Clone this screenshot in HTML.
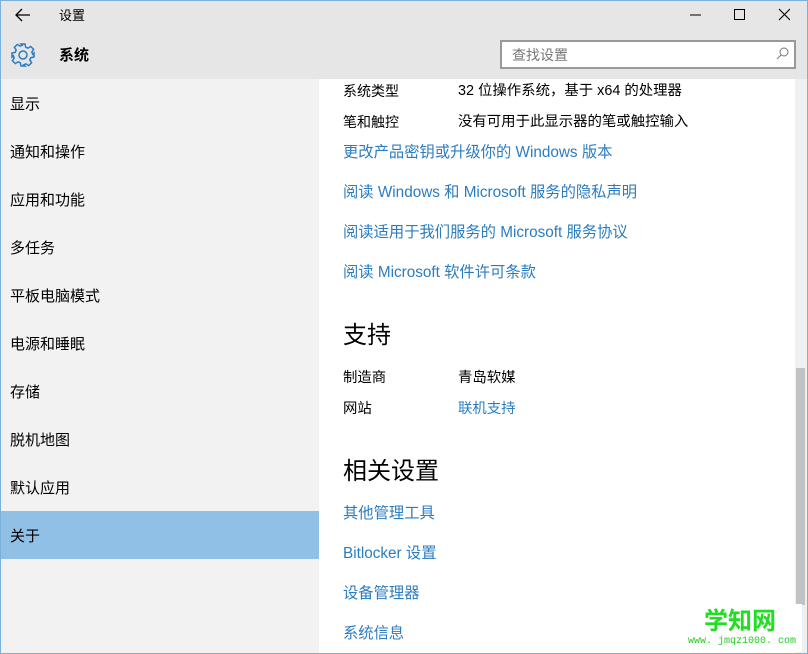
<!DOCTYPE html>
<html><head><meta charset="utf-8"><style>
*{margin:0;padding:0;box-sizing:border-box}
body{width:808px;height:654px;overflow:hidden;background:#fff;font-family:"Liberation Sans","Noto Sans CJK SC",sans-serif;position:relative;color:#000}
.a{position:absolute;white-space:nowrap;line-height:20px;font-size:15px;margin-top:2px}
#frame{position:absolute;left:0;top:0;width:808px;height:654px;border:1px solid #7ab0dc;pointer-events:none;z-index:9}
#hdr{position:absolute;left:0;top:0;width:808px;height:79px;background:#e6e6e6}
#side{position:absolute;left:0;top:79px;width:319px;height:575px;background:#f2f2f2}
#sel{position:absolute;left:0;top:511px;width:319px;height:48px;background:#90c0e6}
.l{color:#2b7cc0;font-size:15.3px}
#track{position:absolute;left:795px;top:79px;width:12px;height:575px;background:#f0f0f0}
#thumb{position:absolute;left:796px;top:368px;width:9px;height:237px;background:#c2c2c2}
</style></head><body>
<div id="hdr"></div>
<div id="side"></div>
<div id="sel"></div>
<div id="track"></div><div id="thumb"></div>
<div id="frame"></div>
<svg style="position:absolute;left:14px;top:7px" width="18" height="16"><path d="M16 8H2M8 2L2 8l6 6" stroke="#000" stroke-width="1.3" fill="none"/></svg>
<div class="a" style="left:59px;top:4px;font-size:13px">设置</div>
<svg style="position:absolute;left:690px;top:8px" width="100" height="14"><path d="M0 7h11" stroke="#000"/><rect x="44.5" y="1.5" width="10" height="10" stroke="#000" fill="none"/><path d="M89 1l11 11M100 1L89 12" stroke="#000" stroke-width="1.1"/></svg>
<svg style="position:absolute;left:10px;top:42px" width="26" height="26" viewBox="0 0 26 26"><g fill="none" stroke="#2b7cc0" stroke-width="1.5"><path d="M11 2h4l.7 3.2 2.2 1 2.8-1.8 2.9 2.9-1.8 2.8 1 2.2L24 11v4l-3.2.7-1 2.2 1.8 2.8-2.9 2.9-2.8-1.8-2.2 1L15 24h-4l-.7-3.2-2.2-1-2.8 1.8-2.9-2.9 1.8-2.8-1-2.2L2 15v-4l3.2-.7 1-2.2-1.8-2.8 2.9-2.9 2.8 1.8 2.2-1z"/><circle cx="13" cy="13" r="4"/></g></svg>
<div class="a" style="left:59px;top:44px;font-weight:bold">系统</div>
<div style="position:absolute;left:500px;top:40px;width:296px;height:29px;border:2px solid #999;background:#fff"></div>
<div class="a" style="left:512px;top:43px;color:#777;font-size:14px">查找设置</div>
<svg style="position:absolute;left:776px;top:47px" width="13" height="13"><circle cx="8" cy="5" r="4" stroke="#777" fill="none"/><path d="M5 8L1 12" stroke="#777"/></svg>
<div class="a" style="left:10px;top:93px">显示</div>
<div class="a" style="left:10px;top:141px">通知和操作</div>
<div class="a" style="left:10px;top:189px">应用和功能</div>
<div class="a" style="left:10px;top:237px">多任务</div>
<div class="a" style="left:10px;top:285px">平板电脑模式</div>
<div class="a" style="left:10px;top:333px">电源和睡眠</div>
<div class="a" style="left:10px;top:381px">存储</div>
<div class="a" style="left:10px;top:429px">脱机地图</div>
<div class="a" style="left:10px;top:477px">默认应用</div>
<div class="a" style="left:10px;top:525px">关于</div>
<div class="a" style="left:343px;top:79px;font-size:14px">系统类型</div>
<div class="a" style="left:458px;top:79px;font-size:14.4px">32 位操作系统，基于 x64 的处理器</div>
<div class="a" style="left:343px;top:110px;font-size:14px">笔和触控</div>
<div class="a" style="left:458px;top:110px;font-size:14.4px">没有可用于此显示器的笔或触控输入</div>
<div class="a l" style="left:343px;top:141px">更改产品密钥或升级你的 Windows 版本</div>
<div class="a l" style="left:343px;top:181px">阅读 Windows 和 Microsoft 服务的隐私声明</div>
<div class="a l" style="left:343px;top:221px">阅读适用于我们服务的 Microsoft 服务协议</div>
<div class="a l" style="left:343px;top:261px">阅读 Microsoft 软件许可条款</div>
<div class="a" style="left:343px;top:318px;font-size:24px;line-height:32px">支持</div>
<div class="a" style="left:343px;top:366px;font-size:14.4px">制造商</div>
<div class="a" style="left:458px;top:366px;font-size:14.4px">青岛软媒</div>
<div class="a" style="left:343px;top:397px;font-size:14.4px">网站</div>
<div class="a l" style="left:458px;top:397px;font-size:14.4px">联机支持</div>
<div class="a" style="left:343px;top:454px;font-size:24px;line-height:32px">相关设置</div>
<div class="a l" style="left:343px;top:502px">其他管理工具</div>
<div class="a l" style="left:343px;top:542px">Bitlocker 设置</div>
<div class="a l" style="left:343px;top:582px">设备管理器</div>
<div class="a l" style="left:343px;top:622px">系统信息</div>
<div style="position:absolute;left:680px;top:604px;width:122px;height:48px;background:#fff"></div>
<div class="a" style="left:704px;top:606px;font-size:24px;line-height:28px;color:#22dd22;font-weight:bold">学知网</div>
<div class="a" style="left:688px;top:634px;font-size:10px;line-height:12px;color:#22cc22;font-family:'Liberation Mono',monospace">www. jmqz1000. com</div>
</body></html>
